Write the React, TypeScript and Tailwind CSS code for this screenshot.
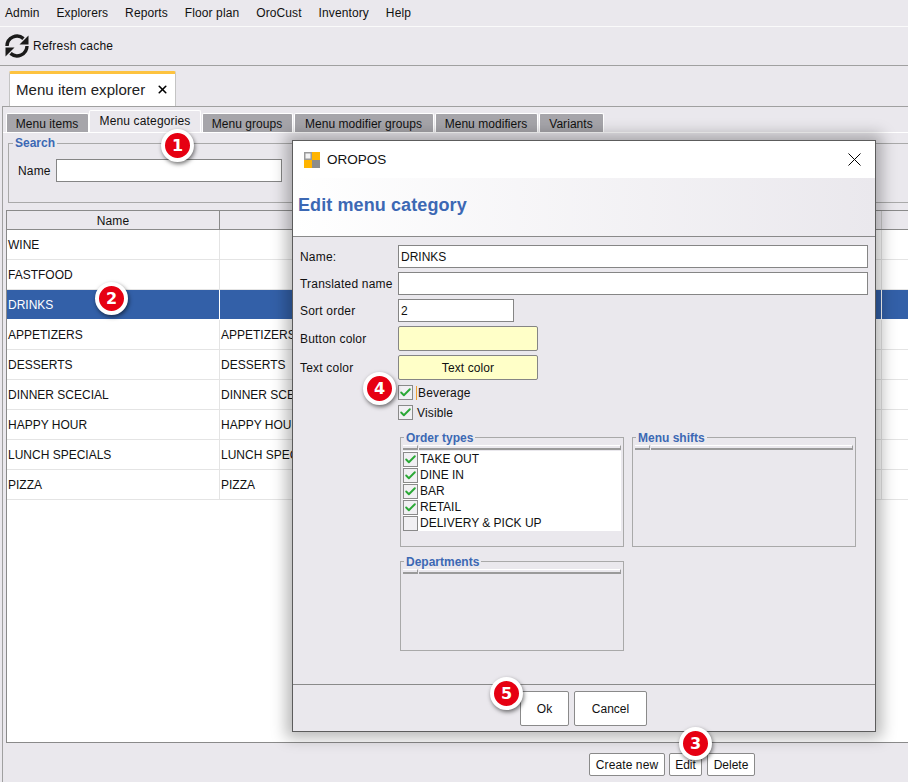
import { ReactNode } from "react";
import { Check, X } from "lucide-react";

const menus = ["Admin", "Explorers", "Reports", "Floor plan", "OroCust", "Inventory", "Help"];

const innerTabs = [
  { name: "Menu items", className: "w-[83px] ml-[3px]" },
  { name: "Menu categories", className: "w-[112px]", active: true },
  { name: "Menu groups", className: "w-[91px] ml-[1px]" },
  { name: "Menu modifier groups", className: "w-[140px] ml-[1px]" },
  { name: "Menu modifiers", className: "w-[103px] ml-[1px]" },
  { name: "Variants", className: "w-[65px] ml-[1px]" },
];

const rows = [
  ["WINE", ""],
  ["FASTFOOD", ""],
  ["DRINKS", ""],
  ["APPETIZERS", "APPETIZERS"],
  ["DESSERTS", "DESSERTS"],
  ["DINNER SCECIAL", "DINNER SCECIAL"],
  ["HAPPY HOUR", "HAPPY HOUR"],
  ["LUNCH SPECIALS", "LUNCH SPECIALS"],
  ["PIZZA", "PIZZA"],
];

const orderTypes = [
  { name: "TAKE OUT", on: true },
  { name: "DINE IN", on: true },
  { name: "BAR", on: true },
  { name: "RETAIL", on: true },
  { name: "DELIVERY & PICK UP", on: false },
];

function Badge({ n, className }: { n: number; className: string }) {
  return (
    <div className={`absolute w-[33px] h-[33px] rounded-full bg-[#e60012] border-[4px] border-white shadow-[1px_2px_4px_rgba(0,0,0,0.55)] flex items-center justify-center text-white font-bold text-[16px] font-['DejaVu_Sans',sans-serif] ${className}`}>
      {n}
    </div>
  );
}

function Box({ on, className = "" }: { on: boolean; className?: string }) {
  return (
    <span className={`w-[15px] h-[15px] shrink-0 border border-[#8a8a8a] bg-[#f1f0f3] flex items-center justify-center ${className}`}>
      {on && <Check size={13} strokeWidth={3.5} className="text-[#2aa836]" />}
    </span>
  );
}

function Group({ title, className, children }: { title: string; className: string; children?: ReactNode }) {
  return (
    <fieldset className={`border border-[#a9a9a9] px-[2px] pb-0 ${className}`}>
      <legend className="ml-[1px] px-[2px] pt-[2px] text-[12px] leading-[14px] font-bold text-[#3c68b4]">{title}</legend>
      <div className="flex h-[5px]">
        <div className="w-[15px] border-t border-white border-b-2 border-b-[#9a9a9a] border-r border-r-[#9a9a9a]" />
        <div className="flex-1 ml-[1px] border-t border-white border-b-2 border-b-[#9a9a9a] border-r border-r-[#9a9a9a]" />
      </div>
      {children}
    </fieldset>
  );
}

function FormRow({ label, children, className = "" }: { label: string; children: ReactNode; className?: string }) {
  return (
    <div className={`flex items-center ${className}`}>
      <span className="w-[98px] shrink-0 text-[12px] tracking-[0.2px] pt-[1px]">{label}</span>
      {children}
    </div>
  );
}

function Dialog() {
  return (
    <div className="absolute left-[292px] top-[140px] w-[584px] h-[592px] bg-[#eae8ed] border border-[#5c5c5c] shadow-[0_0_14px_6px_rgba(0,0,0,0.28)] flex flex-col">
      <div className="h-[37px] bg-white flex items-center pl-[11px] pr-[14px] shrink-0">
        <svg width="16" height="16" viewBox="0 0 16 16" className="shrink-0">
          <rect x="0" y="0" width="8" height="8" fill="#9a9a9a" />
          <rect x="1.5" y="1.5" width="5" height="5" fill="#f4f4f4" />
          <rect x="8" y="0" width="8" height="8" fill="#ffb400" />
          <rect x="0" y="8" width="8" height="8" fill="#ffb400" />
          <rect x="8" y="8" width="8" height="8" fill="#8c8c8c" />
        </svg>
        <span className="ml-[7px] pt-[1px] text-[13.5px] text-[#111]">OROPOS</span>
        <svg width="13" height="13" viewBox="0 0 13 13" className="ml-auto">
          <path d="M0.5 0.5L12.5 12.5M12.5 0.5L0.5 12.5" stroke="#000" strokeWidth="1" fill="none" />
        </svg>
      </div>
      <div className="h-[59px] shrink-0 border-b border-[#8a8a8a] bg-gradient-to-r from-white to-[#eae8ed] flex items-center pl-[5px] pb-[4px]">
        <span className="text-[18px] tracking-[0.1px] font-bold text-[#3c68b4]">Edit menu category</span>
      </div>
      <div className="flex-1 pl-[7px] pr-[7px] pt-[8px] flex flex-col">
        <FormRow label="Name:">
          <div className="flex-1 h-[23px] border border-[#858585] bg-white px-[2px] text-[12px] leading-[22px]">DRINKS</div>
        </FormRow>
        <FormRow label="Translated name" className="mt-[4px]">
          <div className="flex-1 h-[23px] border border-[#858585] bg-white" />
        </FormRow>
        <FormRow label="Sort order" className="mt-[4px]">
          <div className="w-[116px] h-[23px] border border-[#858585] bg-white px-[2px] text-[12px] leading-[22px]">2</div>
        </FormRow>
        <FormRow label="Button color" className="mt-[4px]">
          <div className="w-[140px] h-[25px] rounded-[2px] border border-[#858585] bg-[#ffffc8]" />
        </FormRow>
        <FormRow label="Text color" className="mt-[4px]">
          <div className="w-[140px] h-[25px] rounded-[2px] border border-[#858585] bg-[#ffffc8] text-[12px] tracking-[0.1px] flex items-center justify-center">Text color</div>
        </FormRow>
        <div className="ml-[98px] mt-[5px] flex items-center h-[15px] text-[12px] tracking-[0.15px]">
          <Box on />
          <span className="ml-[3px] pl-[1px] border-l border-[#f0a030] leading-[14px]">Beverage</span>
        </div>
        <div className="ml-[98px] mt-[5px] flex items-center h-[15px] text-[12px] tracking-[0.15px]">
          <Box on />
          <span className="ml-[4px]">Visible</span>
        </div>
        <div className="ml-[100px] mt-[9px] flex gap-[8px]">
          <Group title="Order types" className="w-[224px] h-[118px]">
            <div className="bg-white mt-[1px]">
              {orderTypes.map((t) => (
                <div key={t.name} className="h-[16px] flex items-center text-[12px] leading-[16px]">
                  <Box on={t.on} />
                  <span className="ml-[2px]">{t.name}</span>
                </div>
              ))}
            </div>
          </Group>
          <Group title="Menu shifts" className="w-[224px] h-[118px]" />
        </div>
        <Group title="Departments" className="ml-[100px] mt-[6px] w-[224px] h-[98px]" />
      </div>
      <div className="h-[47px] shrink-0 border-t border-[#8a8a8a] flex items-start gap-[5px] pt-[6px] pl-[227px] text-[12px]">
        <button className="w-[49px] h-[35px] rounded-[2px] border border-[#8a8a8a] bg-white">Ok</button>
        <button className="w-[73px] h-[35px] rounded-[2px] border border-[#8a8a8a] bg-white">Cancel</button>
      </div>
    </div>
  );
}

export default function App() {
  return (
    <div className="relative w-[908px] h-[782px] overflow-hidden bg-[#eae8ed] text-[#111] flex flex-col font-['Liberation_Sans',sans-serif]">
      <div className="h-[27px] shrink-0 border-b border-[#fafafa] flex items-center gap-[17px] pl-[5px] text-[12px] tracking-[0.1px]">
        {menus.map((m) => (
          <span key={m}>{m}</span>
        ))}
      </div>
      <div className="h-[39px] shrink-0 border-b border-[#a0a0a0] flex items-center pl-[5px] text-[12px] tracking-[0.22px]">
        <svg width="24" height="24" viewBox="0 0 24 24" fill="none" className="shrink-0">
          <path d="M2 12A10 10 0 0 1 18.5 4.6" stroke="#1a1a1a" strokeWidth="3.4" />
          <path d="M22 12A10 10 0 0 1 5.5 19.4" stroke="#1a1a1a" strokeWidth="3.4" />
          <path d="M23.5 1.5V10.5H14.5Z" fill="#1a1a1a" />
          <path d="M0.5 22.5V13.5H9.5Z" fill="#1a1a1a" />
        </svg>
        <span className="ml-[4px]">Refresh cache</span>
      </div>
      <div className="h-[40px] shrink-0 pl-[9px] pt-[5px]">
        <div className="w-[167px] h-[36px] border-t-[3px] border-[#fdc33f] rounded-t-[2px] bg-white border-x border-x-[#c4c4c4] flex items-center pl-[6px] text-[15px] tracking-[0.05px] text-[#222]">
          Menu item explorer
          <X size={13} strokeWidth={3} className="ml-[11px] mb-[2px] text-black" />
        </div>
      </div>
      <div className="flex-1 ml-[2px] border-t border-l border-[#a0a0a0] flex flex-col min-h-0">
        <div className="h-[26px] shrink-0 flex items-end border-b border-white">
          {innerTabs.map((t) =>
            t.active ? (
              <div key={t.name} className={`h-[22px] bg-[#eae8ed] rounded-t-[2px] border-t border-x border-white text-[12px] tracking-[0.15px] flex items-center justify-center pb-[2px] ${t.className}`}>
                {t.name}
              </div>
            ) : (
              <div key={t.name} className={`h-[19px] bg-[#a6a5aa] rounded-t-[2px] border-t border-x border-white text-[12px] tracking-[0.05px] flex items-center justify-center pt-[1px] pr-[1px] ${t.className}`}>
                {t.name}
              </div>
            )
          )}
        </div>
        <div className="pl-[5px] pt-[3px] shrink-0">
          <fieldset className="w-[940px] h-[67px] border border-[#a9a9a9]">
            <legend className="ml-[4px] px-[2px] text-[12px] leading-[14px] font-bold text-[#3c68b4]">Search</legend>
            <div className="flex items-center pl-[9px] mt-[9px] text-[12px] tracking-[0.15px]">
              <span>Name</span>
              <div className="ml-[5px] w-[226px] h-[23px] border border-[#858585] bg-white" />
            </div>
          </fieldset>
        </div>
        <div className="mt-[7px] ml-[3px] flex-1 min-h-0 border-y border-l border-[#8a8a8a] bg-white text-[12px] flex flex-col">
          <div className="h-[19px] shrink-0 flex bg-[#eae8ed] border-b border-[#8a8a8a]">
            <div className="w-[213px] border-r border-[#8a8a8a] flex items-center justify-center pt-[1px] tracking-[0.15px]">Name</div>
            <div className="w-[662px] border-r border-[#c8c8c8]" />
            <div className="flex-1" />
          </div>
          {rows.map(([a, b]) => {
            const selected = a === "DRINKS";
            return (
              <div key={a} className={`h-[30px] shrink-0 flex items-center border-b ${selected ? "bg-[#3360a8] text-white border-white" : "border-[#e4e4e4]"}`}>
                <div className={`w-[213px] h-full border-r flex items-center pl-[1px] ${selected ? "border-white" : "border-[#e4e4e4]"}`}>{a}</div>
                <div className={`w-[662px] h-full border-r flex items-center pl-[1px] whitespace-nowrap overflow-hidden ${selected ? "border-white" : "border-[#e4e4e4]"}`}>{b}</div>
              </div>
            );
          })}
        </div>
        <div className="h-[39px] shrink-0 flex items-start pt-[10px] pl-[586px] text-[12px]">
          <button className="w-[76px] h-[23px] rounded-[2px] border border-[#8a8a8a] bg-white tracking-[0.1px]">Create new</button>
          <button className="w-[33px] h-[23px] ml-[4px] rounded-[2px] border border-[#8a8a8a] bg-white">Edit</button>
          <button className="w-[48px] h-[23px] ml-[5px] rounded-[2px] border border-[#8a8a8a] bg-white">Delete</button>
        </div>
      </div>
      <Dialog />
      <Badge n={1} className="left-[161px] top-[129px]" />
      <Badge n={2} className="left-[95px] top-[282px]" />
      <Badge n={3} className="left-[679px] top-[727px]" />
      <Badge n={4} className="left-[363px] top-[372px]" />
      <Badge n={5} className="left-[490px] top-[677px]" />
    </div>
  );
}
